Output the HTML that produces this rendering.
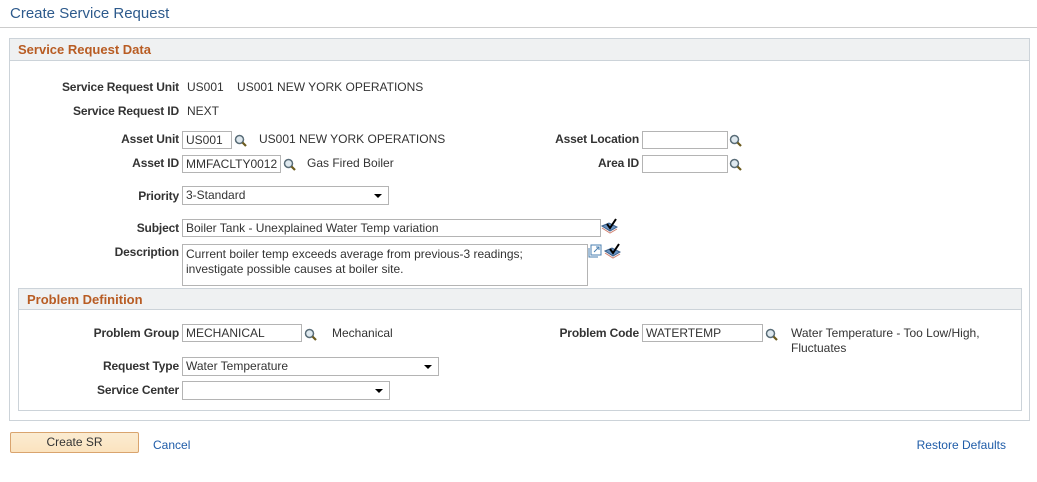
<!DOCTYPE html>
<html><head><style>
*{box-sizing:border-box;margin:0;padding:0}
body{width:1037px;height:482px;background:#fff;font-family:"Liberation Sans",Arial,sans-serif;font-size:12px;color:#333;position:relative;overflow:hidden}
.a{position:absolute;white-space:nowrap}
.lbl{position:absolute;font-weight:bold;text-align:right;white-space:nowrap;letter-spacing:-0.15px}
.inp{position:absolute;border:1px solid #b4b4b4;background:#fff;height:18px;padding:1px 3px;line-height:14px;color:#333}
.sel::after{content:"";position:absolute;right:6px;top:7px;border-left:4px solid transparent;border-right:4px solid transparent;border-top:4px solid #000}
.hdr{position:absolute;background:#eff1f2;border-bottom:1px solid #ccd3d9;color:#b85c23;font-weight:bold;font-size:13px;padding-left:8px;line-height:21px}
</style></head><body>
<svg width="0" height="0" style="position:absolute"><defs>
<g id="mag"><circle cx="5.5" cy="5.5" r="4" fill="#dfe9ef" stroke="#5a6d78" stroke-width="1.5"/><line x1="8.5" y1="8.5" x2="12" y2="12" stroke="#6b5a1e" stroke-width="2.2"/></g>
<g id="spl"><path d="M1 8 L8 5 L16 9 L9 13 Z" fill="#6c95c4" stroke="#3a5f8a"/><path d="M1 10 L9 15 L16 11" fill="none" stroke="#d08070"/><path d="M6 6 L9 10 L15 1" fill="none" stroke="#000" stroke-width="2"/></g>
</defs></svg>
<div class="a" style="left:10px;top:5px;font-size:15px;color:#2d5a8c">Create Service Request</div>
<div class="a" style="left:0;top:27px;width:1037px;height:1px;background:#ccc"></div>
<div class="a" style="left:9px;top:38px;width:1021px;height:383px;border:1px solid #ccd3d9"></div>
<div class="hdr" style="left:10px;top:39px;width:1019px;height:22px">Service Request Data</div>

<div class="lbl" style="right:858px;top:80px">Service Request Unit</div>
<div class="a" style="left:187px;top:80px">US001&nbsp;&nbsp;&nbsp;&nbsp;US001 NEW YORK OPERATIONS</div>
<div class="lbl" style="right:858px;top:104px">Service Request ID</div>
<div class="a" style="left:187px;top:104px">NEXT</div>

<div class="lbl" style="right:858px;top:132px">Asset Unit</div>
<div class="inp" style="left:182px;top:131px;width:50px">US001</div>
<svg class="a" style="left:234px;top:134px" width="14" height="14"><use href="#mag"/></svg>
<div class="a" style="left:259px;top:132px">US001 NEW YORK OPERATIONS</div>
<div class="lbl" style="right:858px;top:156px">Asset ID</div>
<div class="inp" style="left:182px;top:155px;width:99px">MMFACLTY0012</div>
<svg class="a" style="left:283px;top:158px" width="14" height="14"><use href="#mag"/></svg>
<div class="a" style="left:307px;top:156px">Gas Fired Boiler</div>
<div class="lbl" style="right:398px;top:132px">Asset Location</div>
<div class="inp" style="left:642px;top:131px;width:86px"></div>
<svg class="a" style="left:729px;top:134px" width="14" height="14"><use href="#mag"/></svg>
<div class="lbl" style="right:398px;top:156px">Area ID</div>
<div class="inp" style="left:642px;top:155px;width:86px"></div>
<svg class="a" style="left:729px;top:158px" width="14" height="14"><use href="#mag"/></svg>

<div class="lbl" style="right:858px;top:189px">Priority</div>
<div class="inp sel" style="left:182px;top:186px;width:207px;height:19px">3-Standard</div>
<div class="lbl" style="right:858px;top:221px">Subject</div>
<div class="inp" style="left:182px;top:219px;width:419px">Boiler Tank - Unexplained Water Temp variation</div>
<svg class="a" style="left:601px;top:218px" width="17" height="16"><use href="#spl"/></svg>
<div class="lbl" style="right:858px;top:245px">Description</div>
<div class="inp" style="left:182px;top:244px;width:406px;height:42px;line-height:15px;padding-top:2px">Current boiler temp exceeds average from previous-3 readings;<br>investigate possible causes at boiler site.</div>
<svg class="a" style="left:588px;top:244px" width="14" height="14"><rect x="3" y="1" width="10" height="10" fill="#fff" stroke="#4a7fb0"/><path d="M1 4v9h9" fill="none" stroke="#4a7fb0"/><path d="M6 8l5-5M8 3h3v3" stroke="#4a7fb0" fill="none"/></svg>
<svg class="a" style="left:604px;top:243px" width="17" height="16"><use href="#spl"/></svg>

<div class="a" style="left:18px;top:288px;width:1004px;height:123px;border:1px solid #ccd3d9"></div>
<div class="hdr" style="left:19px;top:289px;width:1002px;height:21px">Problem Definition</div>
<div class="lbl" style="right:858px;top:326px">Problem Group</div>
<div class="inp" style="left:182px;top:324px;width:120px">MECHANICAL</div>
<svg class="a" style="left:304px;top:328px" width="14" height="14"><use href="#mag"/></svg>
<div class="a" style="left:332px;top:326px">Mechanical</div>
<div class="lbl" style="right:398px;top:326px">Problem Code</div>
<div class="inp" style="left:642px;top:324px;width:121px">WATERTEMP</div>
<svg class="a" style="left:765px;top:328px" width="14" height="14"><use href="#mag"/></svg>
<div class="a" style="left:791px;top:326px;line-height:15px">Water Temperature - Too Low/High,<br>Fluctuates</div>
<div class="lbl" style="right:858px;top:359px">Request Type</div>
<div class="inp sel" style="left:182px;top:357px;width:257px;height:19px">Water Temperature</div>
<div class="lbl" style="right:858px;top:383px">Service Center</div>
<div class="inp sel" style="left:182px;top:381px;width:208px;height:19px"></div>

<div class="a" style="left:10px;top:432px;width:129px;height:21px;border:1px solid #d9a46e;border-radius:2px;background:linear-gradient(#fbecd2,#fbe3bf);text-align:center;line-height:19px;font-size:12px;color:#333">Create SR</div>
<div class="a" style="left:153px;top:438px;color:#1f5ca8">Cancel</div>
<div class="a" style="right:31px;top:438px;color:#1f5ca8">Restore Defaults</div>
</body></html>
